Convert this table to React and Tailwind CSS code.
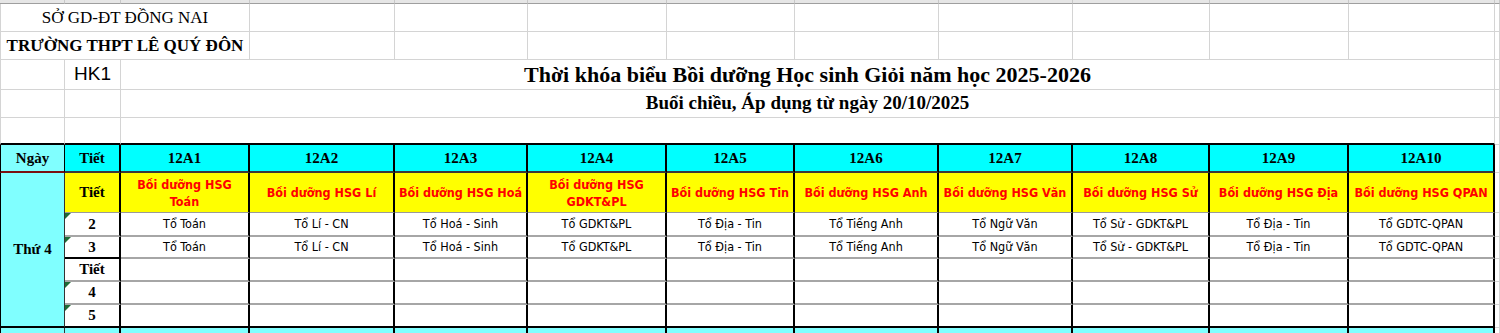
import React from 'react';
import clsx from 'clsx';

const classes = ['12A1', '12A2', '12A3', '12A4', '12A5', '12A6', '12A7', '12A8', '12A9', '12A10'];

const subjects = [
    ['Bồi dưỡng HSG', 'Toán'],
    ['Bồi dưỡng HSG Lí'],
    ['Bồi dưỡng HSG Hoá'],
    ['Bồi dưỡng HSG', 'GDKT&PL'],
    ['Bồi dưỡng HSG Tin'],
    ['Bồi dưỡng HSG Anh'],
    ['Bồi dưỡng HSG Văn'],
    ['Bồi dưỡng HSG Sử'],
    ['Bồi dưỡng HSG Địa'],
    ['Bồi dưỡng HSG QPAN'],
];

const teams = [
    'Tổ Toán', 'Tổ Lí - CN', 'Tổ Hoá - Sinh', 'Tổ GDKT&PL', 'Tổ Địa - Tin',
    'Tổ Tiếng Anh', 'Tổ Ngữ Văn', 'Tổ Sử - GDKT&PL', 'Tổ Địa - Tin', 'Tổ GDTC-QPAN',
];

const letters = ['A', 'B', 'C', 'D', 'E', 'F', 'G', 'H', 'I', 'J', 'K', 'L', 'M'];

const serif = "font-['Liberation_Serif','Times_New_Roman',serif]";
const tahoma = "font-['DejaVu_Sans_Condensed','DejaVu_Sans',sans-serif]";

// plain spreadsheet cell with light gridlines
const Cell = ({ className, children }) => (
    <div className={clsx('relative flex items-center justify-center overflow-hidden border-r border-b border-[#d4d4d4]', className)}>
        {children}
    </div>
);

const Flag = () => (
    <span className="absolute left-0 top-0 w-0 h-0 border-t-[6px] border-r-[6px] border-t-[#1e6b35] border-r-transparent" />
);

const App = () => {
    const empties = (n) => Array.from({ length: n }, (_, i) => <Cell key={i} />);

    return (
        <div className="w-[1500px] h-[333px] overflow-hidden bg-white text-black">
            <div className="grid grid-cols-[65px_56px_129px_145px_133px_139px_128px_144px_134px_137px_139px_146px_1fr] grid-rows-[4px_28px_28px_30px_28px_27px_28px_40px_24px_22px_23px_23px_23px_5px]">
                {/* column letters, mostly scrolled off */}
                {letters.map(l => (
                    <div key={l} className="overflow-hidden bg-[#e6e6e6] border-r border-b border-[#c8c8c8] border-b-[#9f9f9f]">
                        <div className="-mt-[13px] text-center text-[13px] leading-[16px] text-[#444] font-['Liberation_Sans',sans-serif]">{l}</div>
                    </div>
                ))}

                {/* school heading */}
                <Cell className={clsx('col-span-3 border-l text-[17px] whitespace-nowrap', serif)}>SỞ GD-ĐT ĐỒNG NAI</Cell>
                {empties(10)}
                <Cell className={clsx('col-span-3 border-l text-[17px] font-bold whitespace-nowrap', serif)}>TRƯỜNG THPT LÊ QUÝ ĐÔN</Cell>
                {empties(10)}

                {/* title rows */}
                <Cell className="border-l" />
                <Cell className="text-[19px] font-['Liberation_Sans',Arial,sans-serif]">HK1</Cell>
                <Cell className={clsx('col-span-10 text-[22px] font-bold', serif)}>Thời khóa biểu Bồi dưỡng Học sinh Giỏi năm học 2025-2026</Cell>
                <Cell />
                <Cell className="border-l" />
                <Cell />
                <Cell className={clsx('col-span-10 text-[19px] font-bold', serif)}>Buổi chiều, Áp dụng từ ngày 20/10/2025</Cell>
                <Cell />
                <Cell className="border-l border-b-2 border-b-black" />
                <Cell className="border-b-2 border-b-black" />
                <Cell className="col-span-10 border-b-2 border-b-black" />
                <Cell />

                {/* header row */}
                <Cell className={clsx('bg-[#80ffff] border-l border-l-black border-r-black border-b-2 border-b-[#7a1010] text-[15px] font-bold', serif)}>Ngày</Cell>
                <Cell className={clsx('bg-[#00ffff] border-r-2 border-r-black border-b-2 border-b-[#3a3a3a] text-[15px] font-bold', serif)}>Tiết</Cell>
                {classes.map(c => (
                    <Cell key={c} className={clsx('bg-[#00ffff] border-r-2 border-r-black border-b-2 border-b-[#3a3a3a] text-[15px] font-bold', serif)}>{c}</Cell>
                ))}
                <Cell />

                {/* day column */}
                <Cell className={clsx('row-span-6 bg-[#80ffff] border-l border-l-black border-r-[#333] border-b-2 border-b-black text-[15px] font-bold', serif)}>Thứ 4</Cell>

                {/* subjects */}
                <Cell className={clsx('bg-[#ffff00] border-r-2 border-r-black border-b-[#9a9a9a] text-[15px] font-bold', serif)}>Tiết</Cell>
                {subjects.map((s, i) => (
                    <Cell key={i} className={clsx('bg-[#ffff00] border-r-2 border-r-black border-b-[#9a9a9a] text-center text-[12.5px] leading-[17px] font-bold text-[#ff0000] whitespace-nowrap', tahoma)}>
                        <div>{s.map((line, j) => <div key={j}>{line}</div>)}</div>
                    </Cell>
                ))}
                <Cell />

                {/* periods */}
                {['2', '3', 'Tiết', '4', '5'].map((p, r) => (
                    <React.Fragment key={r}>
                        <Cell className={clsx('border-r-2 border-r-black text-[15px] font-bold', serif, r === 1 ? 'border-b-2 border-b-black' : r === 4 ? 'border-b-2 border-b-black' : 'border-b-2 border-b-[#a6a6a6]')}>
                            {p !== 'Tiết' && <Flag />}
                            {p}
                        </Cell>
                        {teams.map((t, i) => (
                            <Cell key={i} className={clsx('border-r-2 border-r-black text-[12.5px] whitespace-nowrap', tahoma, r === 4 ? 'border-b-2 border-b-black' : 'border-b-2 border-b-[#a6a6a6]')}>
                                {r < 2 ? t : ''}
                            </Cell>
                        ))}
                        <Cell />
                    </React.Fragment>
                ))}

                {/* next day, cut off */}
                <Cell className="bg-[#80ffff] border-l border-l-black border-r-[#333] border-b-0" />
                {Array.from({ length: 11 }, (_, i) => (
                    <Cell key={i} className="bg-[#80ffff] border-r-2 border-r-black border-b-0" />
                ))}
                <Cell className="border-b-0" />
            </div>
        </div>
    );
};

export default App;
